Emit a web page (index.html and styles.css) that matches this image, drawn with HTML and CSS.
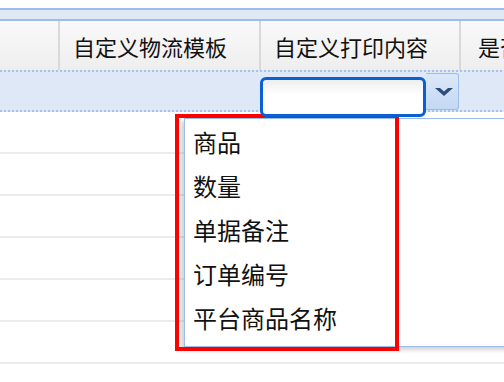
FILE: index.html
```html
<!DOCTYPE html>
<html lang="zh-CN">
  <head>
    <meta charset="utf-8" />
    <title>打印模板设置</title>
    <link rel="stylesheet" href="styles.css">
  </head>

  <body>
    <div class="grid">
      <div class="topbar"></div>

      <!-- column headers -->
      <div class="head">
        <div class="hcell c1"></div>
        <div class="hcell c2">自定义物流模板</div>
        <div class="hcell c3">自定义打印内容</div>
        <div class="hcell c4">是否打印</div>
      </div>

      <!-- filter row -->
      <div class="filter">
        <div class="fcell c1"></div>
        <div class="fcell c2"></div>
        <div class="fcell c3">
          <div class="combo">
            <div class="combo-input"></div>
            <div class="combo-btn">
              <svg width="18" height="8" viewBox="0 0 18 8">
                <path d="M0 0 L5 0 L9 3.5 L13 0 L18 0 L9 8 Z" fill="#2b4c7e"/>
              </svg>
            </div>
          </div>
        </div>
      </div>

      <div class="row"></div>
      <div class="row"></div>
      <div class="row"></div>
      <div class="row"></div>
      <div class="row"></div>
      <div class="row"></div>
      <div class="row"></div>

      <!-- dropdown list of the combo -->
      <ul class="picker">
        <li>商品</li>
        <li>数量</li>
        <li>单据备注</li>
        <li>订单编号</li>
        <li>平台商品名称</li>
      </ul>

      <div class="highlight"></div>
    </div>
  </body>
</html>
```

FILE: styles.css
```css
body {
  margin: 0;
  font-family: "Noto Sans CJK SC", "Noto Sans", sans-serif;
  color: #111;
  background: #fff;
}
.grid {
  position: relative;
  width: 504px;
  height: 382px;
  overflow: hidden;
}
.topbar {
  margin-top: 8px;
  height: 9px;
  background-color: #dfe8f6;
  border-top: 2px solid #9dbce8;
  border-bottom: 2px solid #9dbce8;
}
.head {
  display: flex;
  height: 49px;
  background: linear-gradient(#f9f9f9, #eeeeee);
}
.hcell {
  box-sizing: border-box;
  height: 100%;
  display: flex;
  align-items: center;
  font-size: 22px;
  white-space: nowrap;
  overflow: hidden;
  border-right: 2px solid #d9d9d9;
}
.head .c1 { width: 60px; }
.head .c2 { width: 201px; padding-left: 13px; }
.head .c3 { width: 200px; padding-left: 13px; }
.head .c4 { flex: 1; padding-left: 17px; border-right: none; }

.filter {
  display: flex;
  height: 38px;
  padding: 2px 0;
  background:
    repeating-linear-gradient(90deg, #a6c0ea 0 2px, transparent 2px 4px) top / 100% 2px no-repeat,
    repeating-linear-gradient(90deg, #a6c0ea 0 2px, transparent 2px 4px) bottom / 100% 2px no-repeat,
    #dfe8f6;
}
.filter .c1 { width: 60px; }
.filter .c2 { width: 200px; }
.filter .c3 { flex: 1; }
.combo {
  position: relative;
  z-index: 1;
  display: flex;
  align-items: flex-start;
}
.combo-input {
  box-sizing: border-box;
  width: 166px;
  height: 40px;
  margin-top: 5px;
  border: 3px solid #0a5fd2;
  border-radius: 6px;
  background: linear-gradient(#eeeeee, #ffffff 45%);
}
.combo-btn {
  box-sizing: border-box;
  width: 33px;
  height: 37px;
  margin-top: 1px;
  display: flex;
  align-items: center;
  justify-content: center;
  padding-left: 4px;
  border: 1px solid #9dbce8;
  border-left: none;
  border-radius: 0 3px 3px 0;
  background: linear-gradient(#dce8f8, #c3d8f3);
}
.row {
  height: 40px;
  border-bottom: 2px solid #ececec;
}

.picker {
  position: absolute;
  left: 184px;
  top: 118px;
  width: 340px;
  height: 229px;
  box-sizing: border-box;
  margin: 0;
  padding: 1px 0 0;
  list-style: none;
  background: #fff;
  border: 1px solid #9dbce8;
  box-shadow: -3px 3px 4px rgba(0, 0, 0, 0.18);
}
.picker li {
  height: 44px;
  line-height: 44px;
  padding-left: 8px;
  font-size: 24px;
}
.highlight {
  position: absolute;
  left: 175px;
  top: 114px;
  width: 224px;
  height: 237px;
  box-sizing: border-box;
  border: 4px solid #ff0000;
}
```
